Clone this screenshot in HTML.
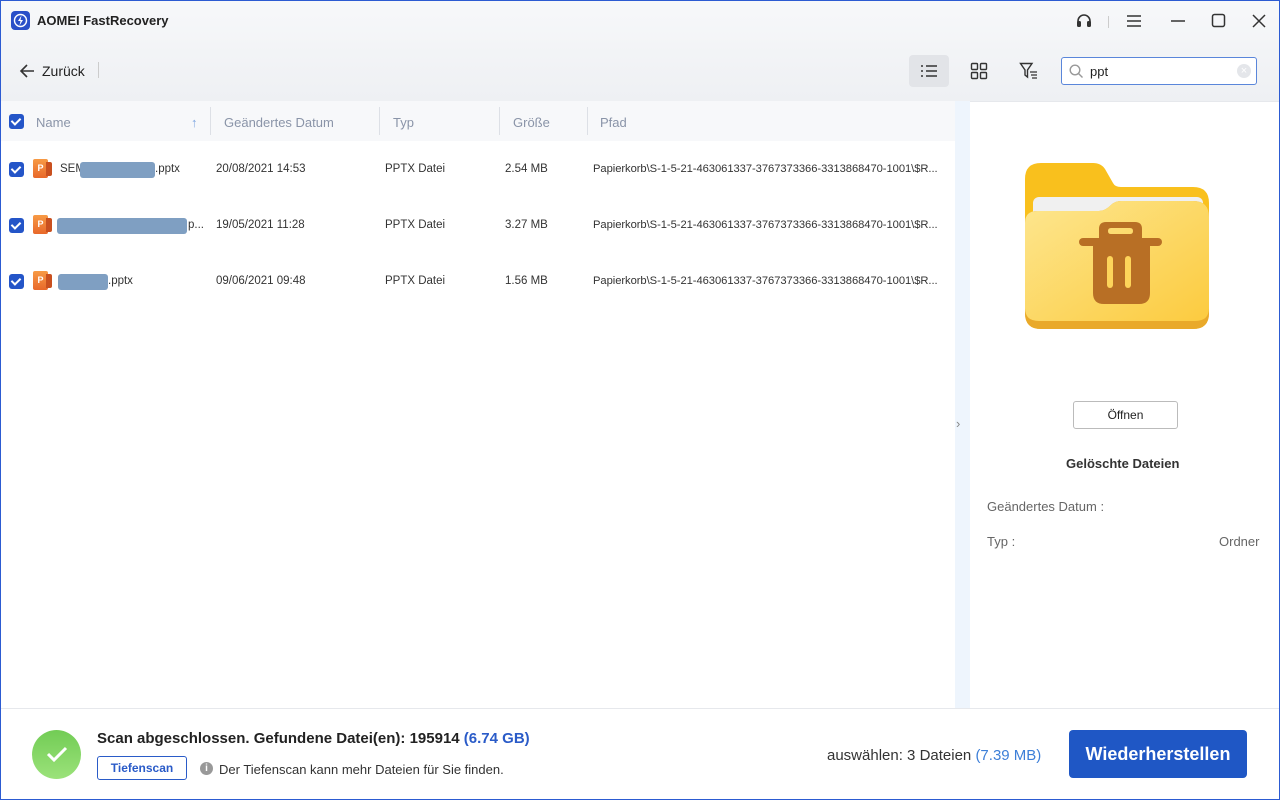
<!DOCTYPE html>
<html><head><meta charset="utf-8"><style>
*{box-sizing:border-box;margin:0;padding:0}
body{width:1280px;height:800px;overflow:hidden;font-family:"Liberation Sans",sans-serif;background:#fff;position:relative;color:#222}
.frame{position:absolute;inset:0;border:1px solid #2c5bd2;pointer-events:none;z-index:10}
.top{position:absolute;left:0;top:0;width:1280px;height:101px;background:linear-gradient(#f7f8fa,#eef0f3)}
.abs{position:absolute}
.th{position:absolute;top:101px;left:0;width:955px;height:40px;background:#f7f8fa;font-size:13px;color:#8a94a8}
.th span{position:absolute;top:14px}
.sep{position:absolute;top:6px;width:1px;height:28px;background:#dde0e6}
.cb{position:absolute;width:15px;height:15px;background:#2455c8;border-radius:3px}
.cb:after{content:"";position:absolute;left:4px;top:2px;width:4px;height:7px;border:solid #fff;border-width:0 2px 2px 0;transform:rotate(45deg)}
.row{position:absolute;left:0;width:955px;height:56px;font-size:11.5px;color:#333}
.row span{position:absolute;top:22px}
.row span.p{font-size:11.2px;white-space:nowrap;letter-spacing:-0.05px}
.pp{position:absolute;left:33px;top:18px;width:19px;height:19px}
.pp i{position:absolute;left:0;top:0;width:15px;height:19px;background:linear-gradient(#f79a45,#e8682a);border-radius:2px;color:#fff;font-style:normal;font-size:9px;font-weight:bold;text-align:center;line-height:19px}
.pp b{position:absolute;left:13px;top:3px;width:6px;height:14px;background:#c9501f;border-radius:0 2px 2px 0}
.blur{position:absolute;top:21px;height:16px;background:#7f9fc2;border-radius:3px}
.bot{position:absolute;left:0;top:708px;width:1280px;height:92px;border-top:1px solid #e6e8ec;background:#fff}
</style></head><body>
<div class="top"></div>
<div class="abs" style="left:11px;top:11px;width:19px;height:19px;background:#2a4fc8;border-radius:4px"><svg width="19" height="19" viewBox="0 0 19 19"><circle cx="9.5" cy="9.5" r="6" fill="none" stroke="#fff" stroke-width="1.4"/><path d="M10.5 4.5 L7 10 H9.5 L8.5 14.5 L12 9 H9.5 Z" fill="#fff"/></svg></div>
<div class="abs" style="left:37px;top:13px;font-size:13px;font-weight:bold;color:#222">AOMEI FastRecovery</div>
<svg class="abs" style="left:1074px;top:12px" width="20" height="18" viewBox="0 0 20 18"><path d="M4 12 V9 a6 6 0 0 1 12 0 V12" fill="none" stroke="#333" stroke-width="1.6"/><rect x="3" y="9" width="4" height="6" rx="1.5" fill="#333"/><rect x="13" y="9" width="4" height="6" rx="1.5" fill="#333"/></svg>
<div class="abs" style="left:1108px;top:16px;width:1px;height:12px;background:#ccc"></div>
<svg class="abs" style="left:1126px;top:14px" width="16" height="14"><path d="M1 2H15M1 7H15M1 12H15" stroke="#333" stroke-width="1.5"/></svg>
<svg class="abs" style="left:1170px;top:14px" width="16" height="14"><path d="M1 7H15" stroke="#333" stroke-width="1.5"/></svg>
<svg class="abs" style="left:1211px;top:13px" width="16" height="16"><rect x="1.5" y="1.5" width="12" height="12" rx="2" fill="none" stroke="#333" stroke-width="1.5"/></svg>
<svg class="abs" style="left:1251px;top:13px" width="16" height="16"><path d="M2 2L14 14M14 2L2 14" stroke="#333" stroke-width="1.5"/></svg>
<svg class="abs" style="left:18px;top:63px" width="18" height="16"><path d="M16 8H3M9 2L3 8L9 14" fill="none" stroke="#333" stroke-width="1.6"/></svg>
<div class="abs" style="left:42px;top:63px;font-size:14px;color:#222">Zurück</div>
<div class="abs" style="left:98px;top:62px;width:1px;height:16px;background:#ccc"></div>
<div class="abs" style="left:909px;top:55px;width:40px;height:32px;background:#e2e4e8;border-radius:4px"></div>
<svg class="abs" style="left:920px;top:64px" width="18" height="14"><path d="M1 2h2M1 7h2M1 12h2M6 2h11M6 7h11M6 12h11" stroke="#333" stroke-width="1.6"/></svg>
<svg class="abs" style="left:970px;top:62px" width="18" height="18"><rect x="1.5" y="1.5" width="6" height="6" rx="1" fill="none" stroke="#333" stroke-width="1.4"/><rect x="10.5" y="1.5" width="6" height="6" rx="1" fill="none" stroke="#333" stroke-width="1.4"/><rect x="1.5" y="10.5" width="6" height="6" rx="1" fill="none" stroke="#333" stroke-width="1.4"/><rect x="10.5" y="10.5" width="6" height="6" rx="1" fill="none" stroke="#333" stroke-width="1.4"/></svg>
<svg class="abs" style="left:1019px;top:62px" width="20" height="18"><path d="M1.5 1.5H13L8.5 8V15L6 13V8Z" fill="none" stroke="#333" stroke-width="1.4"/><path d="M11 10h7M12 13h6M13 16h5" stroke="#333" stroke-width="1.2"/></svg>
<div class="abs" style="left:1061px;top:57px;width:196px;height:28px;border:1px solid #5a86da;border-radius:3px;background:#fff"></div>
<svg class="abs" style="left:1069px;top:64px" width="15" height="15"><circle cx="6" cy="6" r="4.8" fill="none" stroke="#999" stroke-width="1.4"/><path d="M9.5 9.5L13.5 13.5" stroke="#999" stroke-width="1.4"/></svg>
<div class="abs" style="left:1090px;top:64px;font-size:13px;color:#222">ppt</div>
<div class="abs" style="left:1237px;top:64px;width:14px;height:14px;border-radius:50%;background:#e4e6ea;color:#fff;font-size:11px;text-align:center;line-height:14px">×</div>

<div class="th"><div class="cb" style="left:9px;top:13px"></div><span style="left:36px">Name</span><span style="left:191px;color:#7ea6e0">↑</span><div class="sep" style="left:210px"></div><span style="left:224px">Geändertes Datum</span><div class="sep" style="left:379px"></div><span style="left:393px">Typ</span><div class="sep" style="left:499px"></div><span style="left:513px">Größe</span><div class="sep" style="left:587px"></div><span style="left:600px">Pfad</span></div>

<div class="row" style="top:141px"><div class="cb" style="left:9px;top:21px"></div><div class="pp"><i>P</i><b></b></div><span style="left:60px">SEM</span><div class="blur" style="left:80px;width:75px"></div><span style="left:155px">.pptx</span><span style="left:216px">20/08/2021 14:53</span><span style="left:385px">PPTX Datei</span><span style="left:505px">2.54 MB</span><span class="p" style="left:593px">Papierkorb\S-1-5-21-463061337-3767373366-3313868470-1001\$R...</span></div>
<div class="row" style="top:197px"><div class="cb" style="left:9px;top:21px"></div><div class="pp"><i>P</i><b></b></div><div class="blur" style="left:57px;width:130px"></div><span style="left:188px">p...</span><span style="left:216px">19/05/2021 11:28</span><span style="left:385px">PPTX Datei</span><span style="left:505px">3.27 MB</span><span class="p" style="left:593px">Papierkorb\S-1-5-21-463061337-3767373366-3313868470-1001\$R...</span></div>
<div class="row" style="top:253px"><div class="cb" style="left:9px;top:21px"></div><div class="pp"><i>P</i><b></b></div><div class="blur" style="left:58px;width:50px"></div><span style="left:108px">.pptx</span><span style="left:216px">09/06/2021 09:48</span><span style="left:385px">PPTX Datei</span><span style="left:505px">1.56 MB</span><span class="p" style="left:593px">Papierkorb\S-1-5-21-463061337-3767373366-3313868470-1001\$R...</span></div>

<div class="abs" style="left:955px;top:101px;width:15px;height:607px;background:#eef5fd"></div>
<div class="abs" style="left:956px;top:416px;font-size:13px;color:#888">›</div>
<div class="abs" style="left:970px;top:101px;width:310px;height:1px;background:#e6e8ec"></div>

<svg class="abs" style="left:1025px;top:163px" width="184" height="168" viewBox="0 0 184 168">
<defs><linearGradient id="g" x1="0" y1="0" x2="1" y2="1"><stop offset="0" stop-color="#fde68f"/><stop offset="1" stop-color="#fccb3f"/></linearGradient></defs>
<path d="M0 16 Q0 0 16 0 H68 Q76 0 80 6 L88 20 Q90 24 96 24 H168 Q184 24 184 40 V150 Q184 166 168 166 H16 Q0 166 0 150 Z" fill="#f9c01d"/>
<rect x="8" y="34" width="170" height="30" rx="6" fill="#f0f0f0"/>
<path d="M0 60 Q0 48 12 48 H74 Q80 48 86 42 Q90 38 96 38 H168 Q184 38 184 54 V150 Q184 166 168 166 H16 Q0 166 0 150 Z" fill="#e9a92a"/>
<path d="M0 60 Q0 48 12 48 H74 Q80 48 86 42 Q90 38 96 38 H168 Q184 38 184 54 V145 Q184 158 170 158 H14 Q0 158 0 145 Z" fill="url(#g)"/>
<path d="M74 77 V66 Q74 59 81 59 H110 Q117 59 117 66 V77 Z M83 68 Q83 71 86 71 H105 Q108 71 108 68 Q108 65 105 65 H86 Q83 65 83 68 Z" fill="#b86f25" fill-rule="evenodd"/>
<rect x="54" y="75" width="83" height="8" rx="4" fill="#b86f25"/>
<path d="M68 82 H125 V130 Q125 141 114 141 H79 Q68 141 68 130 Z" fill="#b86f25"/>
<rect x="82" y="93" width="6" height="32" rx="3" fill="#fdd45a"/>
<rect x="100" y="93" width="6" height="32" rx="3" fill="#fdd45a"/>
</svg>

<div class="abs" style="left:1073px;top:401px;width:105px;height:28px;border:1px solid #bbb;border-radius:3px;font-size:12px;text-align:center;line-height:26px;color:#222">Öffnen</div>
<div class="abs" style="left:1066px;top:456px;font-size:13px;font-weight:bold;color:#333">Gelöschte Dateien</div>
<div class="abs" style="left:987px;top:499px;font-size:13px;color:#666">Geändertes Datum :</div>
<div class="abs" style="left:987px;top:534px;font-size:13px;color:#666">Typ :</div>
<div class="abs" style="left:1219px;top:534px;font-size:13px;color:#666">Ordner</div>

<div class="bot"></div>
<div class="abs" style="left:32px;top:730px;width:49px;height:49px;border-radius:50%;background:linear-gradient(#72cc55,#9be27a)"></div>
<svg class="abs" style="left:44px;top:743px" width="26" height="22"><path d="M4 11L10 17L22 5" fill="none" stroke="#fff" stroke-width="3"/></svg>
<div class="abs" style="left:97px;top:730px;font-size:15px;font-weight:bold;color:#222">Scan abgeschlossen. Gefundene Datei(en): 195914 <span style="color:#2a5bc8">(6.74 GB)</span></div>
<div class="abs" style="left:97px;top:756px;width:90px;height:24px;border:1px solid #2a5bc8;border-radius:3px;font-size:12px;font-weight:bold;color:#2a5bc8;text-align:center;line-height:22px">Tiefenscan</div>
<div class="abs" style="left:200px;top:762px;width:13px;height:13px;border-radius:50%;background:#999;color:#fff;font-size:10px;font-weight:bold;text-align:center;line-height:13px">i</div>
<div class="abs" style="left:219px;top:762px;font-size:13px;color:#333">Der Tiefenscan kann mehr Dateien für Sie finden.</div>
<div class="abs" style="left:827px;top:747px;font-size:15px;color:#333">auswählen: 3 Dateien <span style="color:#3d7fd8">(7.39 MB)</span></div>
<div class="abs" style="left:1069px;top:730px;width:178px;height:48px;background:#1f57c5;border-radius:4px;color:#fff;font-size:18px;font-weight:bold;text-align:center;line-height:48px">Wiederherstellen</div>
<div class="frame"></div>
</body></html>
